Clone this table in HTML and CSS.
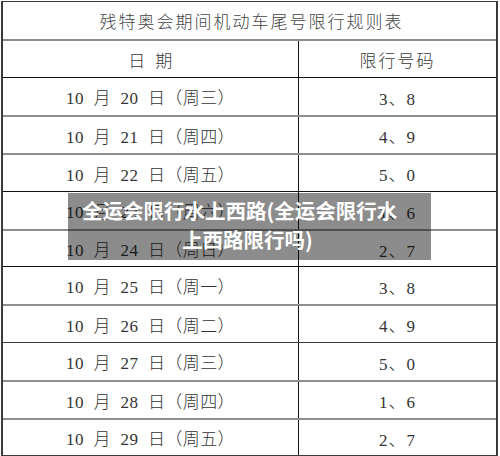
FILE: index.html
```html
<!DOCTYPE html>
<html lang="zh">
<head>
<meta charset="utf-8">
<title>残特奥会期间机动车尾号限行规则表</title>
<link rel="stylesheet" href="styles.css">
</head>
<body>
<div class="page">
  <div class="sheet">
    <div class="row title dark">残特奥会期间机动车尾号限行规则表</div>
    <div class="row gray"><div class="c1 head">日 期</div><div class="c2 head wide">限行号码</div></div>
    <div class="row black"><div class="c1">10 月 20 日（周三）</div><div class="c2">3、8</div></div>
    <div class="row gray"><div class="c1">10 月 21 日（周四）</div><div class="c2">4、9</div></div>
    <div class="row gray"><div class="c1">10 月 22 日（周五）</div><div class="c2">5、0</div></div>
    <div class="row black"><div class="c1">10 月 23 日（周六）</div><div class="c2">1、6</div></div>
    <div class="row gray short"><div class="c1">10 月 24 日（周日）</div><div class="c2">2、7</div></div>
    <div class="row black"><div class="c1">10 月 25 日（周一）</div><div class="c2">3、8</div></div>
    <div class="row gray"><div class="c1">10 月 26 日（周二）</div><div class="c2">4、9</div></div>
    <div class="row dark"><div class="c1">10 月 27 日（周三）</div><div class="c2">5、0</div></div>
    <div class="row gray"><div class="c1">10 月 28 日（周四）</div><div class="c2">1、6</div></div>
    <div class="row gray short"><div class="c1">10 月 29 日（周五）</div><div class="c2">2、7</div></div>
  </div>
  <div class="overlay">全运会限行水上西路(全运会限行水上西路限行吗)</div>
</div>
</body>
</html>
```

FILE: styles.css
```css
html, body {
  margin: 0;
  padding: 0;
  background: #ffffff;
}

.page {
  position: relative;
  width: 500px;
  height: 456px;
  overflow: hidden;
}

.sheet {
  margin-top: 1px;
  margin-left: 1px;
  width: 497px;
  box-sizing: border-box;
  border-left: 2px solid #3a3a3a;
  border-right: 2px solid #3a3a3a;
  border-bottom: 1px solid #3a3a3a;
  font-family: "Liberation Serif", "Noto Sans CJK SC", serif;
  font-size: 17px;
  font-weight: 300;
  color: #333333;
}

.row {
  box-sizing: border-box;
  height: 38px;
  display: grid;
  grid-template-columns: 295px 1fr;
  align-items: stretch;
}

.row.short { height: 37px; }

.row.dark { border-top: 1px solid #3c3c3c; }
.row.black { border-top: 1px solid #111111; }
.row.gray { border-top: 2px solid #8e8e8e; }

.title {
  display: flex;
  align-items: center;
  justify-content: center;
  letter-spacing: 2px;
  color: #444444;
  padding-left: 4px;
}

.c1, .c2 {
  display: flex;
  align-items: center;
  justify-content: center;
  word-spacing: 5px;
}

.c1 {
  letter-spacing: 0.4px;
}

.c2 {
  border-left: 1px solid #111111;
  padding-top: 1px;
  letter-spacing: 1px;
}

.head {
  color: #3a3a3a;
}

.c2.wide {
  letter-spacing: 2px;
}

.overlay {
  position: absolute;
  left: 68px;
  top: 193px;
  width: 363px;
  box-sizing: border-box;
  padding: 3px 18px 6px 14px;
  background: rgba(0, 0, 0, 0.45);
  color: #ffffff;
  font-family: "Noto Sans CJK SC", "Noto Sans", sans-serif;
  font-weight: 700;
  font-size: 20.5px;
  line-height: 29px;
  text-align: left;
  text-align-last: center;
}
```
